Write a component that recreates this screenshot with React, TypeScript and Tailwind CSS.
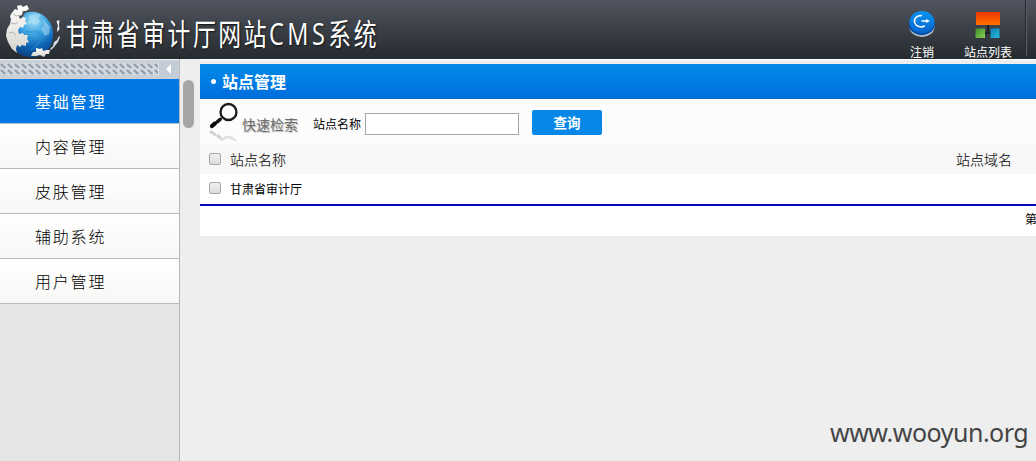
import React from 'react';

const menu = ['基础管理', '内容管理', '皮肤管理', '辅助系统', '用户管理'];

function GlobeLogo() {
  return (
    <svg width="60" height="59" viewBox="0 0 60 59" className="block shrink-0">
      <defs>
        <radialGradient id="globe" cx="0.55" cy="0.2" r="0.8">
          <stop offset="0" stopColor="#a5def6" />
          <stop offset="0.35" stopColor="#43a9e2" />
          <stop offset="0.7" stopColor="#0f66b8" />
          <stop offset="1" stopColor="#0a4482" />
        </radialGradient>
        <linearGradient id="piece" x1="0" y1="0" x2="0" y2="1">
          <stop offset="0" stopColor="#ffffff" />
          <stop offset="1" stopColor="#d5d2cd" />
        </linearGradient>
      </defs>
      <path d="M25 13C40 8 53 20 53 34C53 49 44 57 31 57C20 57 12 50 10 40Z" fill="url(#globe)" />
      <path d="M29 16q7-4 12-1l-3 3 3 4-5 3-5-2-3 2zM43 19l7 8-1 7-4 2-4-7 3-3z" fill="#c0e6f7" opacity="0.45" />
      <path d="M26 31q6 2 11 0l5 6-4 7-7 6" fill="none" stroke="#258bd5" strokeWidth="2" opacity="0.5" />
      <path
        d="M11 14l4-5 3 1-1-4 4-1 2 2 4-2 2 4-3 2-3 0-1 4-3 1 1 3 3-2 3 1-1 3 2 3-3 1-1 3-3-1-2 3 1 4 4-1 1 2 4 0-1 4 2 3-3 1 0 3-4-1-2 2-3-2-1 4 1 4-5-4-4-7-2-6 1-7 3-5 1-5-1-2z"
        fill="url(#piece)"
      />
      <path d="M13 14l3 2 4-1M11 23l4 1 3-2M9 33l4-1 3 3" fill="none" stroke="#aeb4b8" strokeWidth="1" />
      <path d="M31 56l2-4 3 0 0-4 4 1 2-1 1 3 4-1 3 0-1 4-3 0-2 3-4-2-4 1z" fill="url(#piece)" />
      <path d="M50 49l3-3 1-4 3-2 2-4 1 1-2 5-4 5-3 3z" fill="#d5dde4" />
      <path d="M56.500 21l3-1-.5 5 .5 4-2 3-.5-3 1-3z" fill="#eceff2" />
    </svg>
  );
}

function LogoutIcon() {
  return (
    <svg width="28" height="28" viewBox="0 0 28 28" className="block">
      <defs>
        <linearGradient id="disc" x1="0" y1="0" x2="0" y2="1">
          <stop offset="0" stopColor="#0794f2" />
          <stop offset="1" stopColor="#0864cc" />
        </linearGradient>
      </defs>
      <ellipse cx="14" cy="17" rx="12.500" ry="10" fill="#c2c7ce" />
      <ellipse cx="13.800" cy="14.500" rx="13" ry="10.700" fill="#064da6" />
      <ellipse cx="14" cy="12" rx="12.500" ry="11" fill="url(#disc)" />
      <path d="M14 5.600C8 5.600 5.500 9 6.800 12.800c1.400 4 6.200 5 10 3.200" fill="none" stroke="#fff" strokeWidth="1.500" />
      <path d="M13.500 11h5" stroke="#fff" strokeWidth="1.500" />
      <path d="M18 9l4 2-4 2z" fill="#fff" />
    </svg>
  );
}

function SitesIcon() {
  return (
    <svg width="26" height="28" viewBox="0 0 26 28" className="block">
      <defs>
        <linearGradient id="red" x1="0" y1="0" x2="0" y2="1">
          <stop offset="0" stopColor="#ec3500" />
          <stop offset="1" stopColor="#ff7200" />
        </linearGradient>
        <linearGradient id="green" x1="0" y1="0" x2="1" y2="1">
          <stop offset="0" stopColor="#3d8d2c" />
          <stop offset="1" stopColor="#8bd052" />
        </linearGradient>
        <linearGradient id="cyan" x1="0" y1="0" x2="1" y2="1">
          <stop offset="0" stopColor="#0d80b0" />
          <stop offset="1" stopColor="#27b9df" />
        </linearGradient>
      </defs>
      <path d="M13 15v8M9 23h8" stroke="#1d2228" strokeWidth="2" />
      <rect x="1" y="2" width="24" height="13" fill="url(#red)" />
      <rect x="0.500" y="18.500" width="9.500" height="9.500" fill="url(#green)" />
      <rect x="15.500" y="18.500" width="9" height="9.500" fill="url(#cyan)" />
    </svg>
  );
}

function Splitter() {
  return (
    <svg width="180" height="20" viewBox="0 0 180 20" className="block shrink-0">
      <defs>
        <pattern id="weave" y="4" width="7" height="6" patternUnits="userSpaceOnUse">
          <rect width="7" height="6" fill="#d3d9de" />
          <path d="M0.800 1l4.500 4" stroke="#929eac" strokeWidth="2.300" />
        </pattern>
      </defs>
      <rect width="180" height="20" fill="#c9d0d8" />
      <rect y="4" width="158" height="12" fill="url(#weave)" />
      <rect x="158" y="2" width="20" height="17" fill="#c4ccd5" />
      <path d="M158.500 3v14" stroke="#dfe5ea" />
      <rect width="180" height="1" fill="#eef0f2" />
      <path d="M171 5v10l-5-5z" fill="#fff" />
      <path d="M179.500 0v20" stroke="#b8bcc0" />
    </svg>
  );
}

function SearchIcon() {
  return (
    <svg width="34" height="42" viewBox="0 0 34 42" className="block shrink-0">
      <circle cx="20.500" cy="13" r="8" fill="#fdfdfd" stroke="#1c1c1c" strokeWidth="2.300" />
      <path d="M4 27l3-2.600" stroke="#080808" strokeWidth="4.200" strokeLinecap="round" />
      <path d="M9.500 22.600l2.800-2.400" stroke="#111" strokeWidth="3.400" strokeLinecap="round" />
      <path d="M3 33l4 2.500M10 37l2 1.500" stroke="#d2d2d2" strokeWidth="3.200" strokeLinecap="round" />
      <path d="M13 42q7-8 15 0" stroke="#e0e0e0" strokeWidth="2.300" fill="none" />
    </svg>
  );
}

function Check() {
  return (
    <span
      role="checkbox"
      aria-checked="false"
      className="block h-3 w-3 shrink-0 rounded-[2px] border border-[#a8a8a8] bg-linear-to-b from-[#f0f0f0] to-[#dcdcdc]"
    />
  );
}

export default function App() {
  return (
    <div className="relative flex h-[461px] w-[1036px] flex-col overflow-hidden bg-[#eee] font-['Noto_Sans_CJK_SC',sans-serif] text-black">
      <header className="flex h-[59px] shrink-0 bg-linear-to-b from-[#50555f] to-[#262b30]">
        <GlobeLogo />
        <h1 className="ml-[6px] mt-[10px] w-[320px] origin-left scale-x-[0.76] whitespace-nowrap text-[30px] leading-[44px] tracking-[3.4px] text-white [text-shadow:1px_1px_2px_#111]">
          甘肃省审计厅网站<span className="font-['Open_Sans',sans-serif] text-[31px] tracking-[4.5px]">CMS</span>系统
        </h1>
        <nav className="ml-auto flex text-xs leading-[14px] text-white">
          <a className="flex w-[60px] flex-col items-center pt-[10px]">
            <LogoutIcon />
            <span className="mt-[7px]">注销</span>
          </a>
          <a className="ml-[5px] flex w-[62px] flex-col items-center pt-[10px]">
            <SitesIcon />
            <span className="mt-[7px]">站点列表</span>
          </a>
          <span className="ml-[6px] mr-[9px] h-[56px] w-[2px] border-l border-[#24282e] bg-[#5a6069]" />
        </nav>
      </header>

      <div className="flex min-h-0 flex-1">
        <aside className="flex w-[180px] shrink-0 flex-col bg-[#e4e5e7]">
          <Splitter />
          <ul className="flex-1 border-r border-[#b4b6b9]">
            {menu.map((label, i) => (
              <li
                key={label}
                className={
                  i === 0
                    ? 'h-[45px] border-b border-[#b5c2ce] bg-[#0077e2] pl-[35px] text-base leading-[45px] tracking-[1.8px] text-white'
                    : 'h-[45px] border-b border-[#b7b9bb] bg-linear-to-b from-white to-[#f7f7f5] pl-[35px] text-base font-light leading-[45px] tracking-[1.8px] text-black'
                }
              >
                {label}
              </li>
            ))}
          </ul>
        </aside>

        <div className="flex w-5 shrink-0 flex-col pl-[3px] pt-[21px]">
          <span className="h-[48px] w-[11px] rounded-full bg-[#a6a6a6]" />
        </div>

        <main className="min-w-0 flex-1 border-t border-white pt-1">
          <h2 className="flex h-[35px] items-center border-b border-[#0866c4] bg-linear-to-b from-[#048bea] to-[#006edd] pb-px pl-[11px] text-base font-bold text-white">
            <span className="mr-[6px] mt-[2px] h-[5px] w-[5px] rounded-full bg-white" />
            站点管理
          </h2>
          <form className="flex h-[45px] bg-[#fcfcfc] pl-2">
            <SearchIcon />
            <span className="pt-[14px] text-sm leading-[22px] text-[#6e6e6e] [text-shadow:1px_1px_1px_#bbb]">快速检索</span>
            <label className="ml-[15px] pt-[16px] text-xs leading-[18px]">站点名称</label>
            <input className="ml-1 mt-[14px] h-[22px] w-[154px] border border-[#a5a5a5] bg-white px-1 text-xs" />
            <button type="button" className="ml-[13px] mt-[11px] h-[25px] w-[70px] rounded-[2px] bg-[#0788e8] text-[13.5px] font-bold leading-[25px] text-white">
              查询
            </button>
          </form>
          <div className="flex h-[30px] items-center bg-[#f7f7f7] pb-px pl-[9px] text-sm font-[350] text-[#333]">
            <Check />
            <span className="ml-[9px]">站点名称</span>
            <span className="ml-auto mr-6">站点域名</span>
          </div>
          <div className="flex h-[32px] items-center border-b-2 border-[#0707bb] bg-white pb-[2px] pl-[9px] text-xs">
            <Check />
            <span className="ml-[9px] pt-px">甘肃省审计厅</span>
          </div>
          <div className="h-[30px] overflow-hidden bg-white pl-[825px] text-xs leading-[26px]">
            <span className="block w-3">第</span>
          </div>
        </main>
      </div>
      <span className="absolute left-[830px] top-[414px] whitespace-nowrap font-['Noto_Sans',sans-serif] text-[25px] leading-[36px] tracking-[-0.48px] text-[#444]">
        www.wooyun.org
      </span>
    </div>
  );
}
